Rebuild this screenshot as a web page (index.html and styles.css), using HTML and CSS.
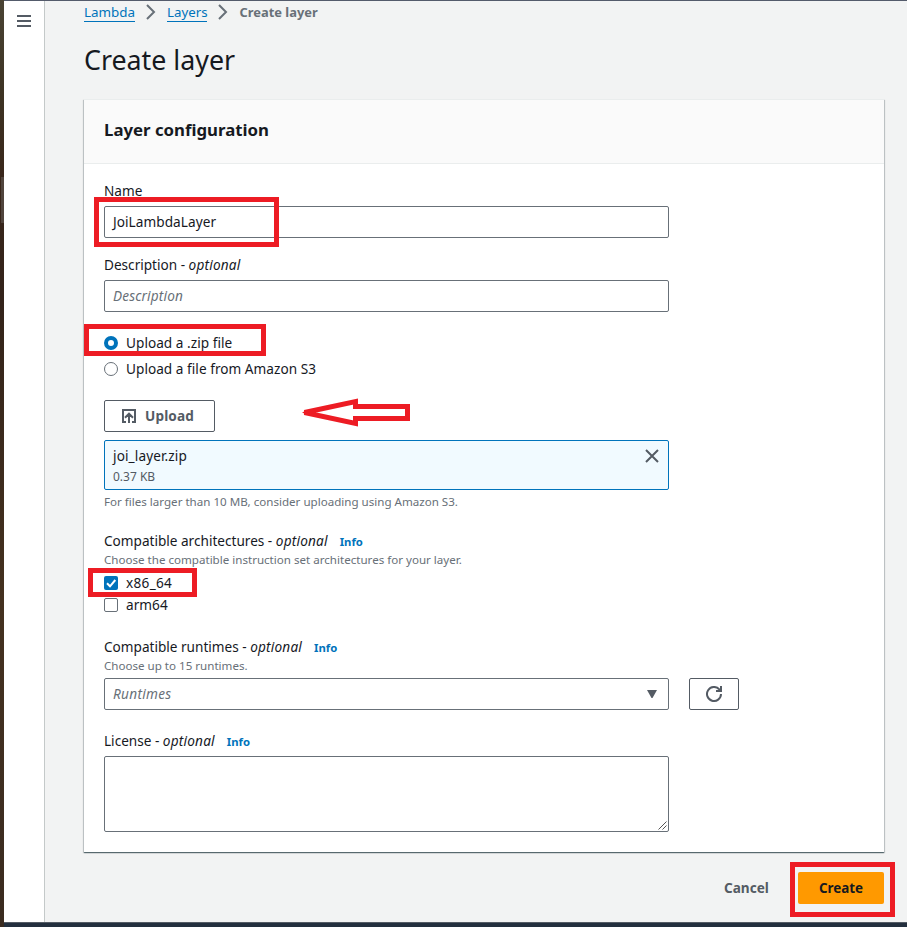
FILE: index.html
```html
<!DOCTYPE html>
<html lang="en">
<head>
<meta charset="utf-8">
<title>Create layer</title>
<link rel="stylesheet" href="styles.css">
</head>
<body>
<div class="desktop-edge"><div class="edge-handle"></div></div>
<div class="window">
  <div class="content">
    <nav class="rail">
      <svg width="14" height="12" viewBox="0 0 14 12"><path d="M0 1h14M0 6h14M0 11h14" stroke="#545b64" stroke-width="2"/></svg>
    </nav>
    <main class="main">
      <div class="crumbs">
        <a class="crumb-lambda">Lambda</a>
        <svg width="10" height="16" viewBox="0 0 10 16"><path d="M1 1l7 7-7 7" fill="none" stroke="#687078" stroke-width="2"/></svg>
        <a class="crumb-layers">Layers</a>
        <svg width="10" height="16" viewBox="0 0 10 16"><path d="M1 1l7 7-7 7" fill="none" stroke="#687078" stroke-width="2"/></svg>
        <span class="crumb-current">Create layer</span>
      </div>
      <h1>Create layer</h1>
      <section class="card">
        <header class="card-head"><h2>Layer configuration</h2></header>
        <div class="card-body">
          <div class="field">
            <label class="label">Name</label>
            <div class="input">JoiLambdaLayer</div>
          </div>
          <div class="field">
            <label class="label">Description - <i>optional</i></label>
            <div class="input placeholder">Description</div>
          </div>
          <div class="radios group">
            <div class="option"><span class="radio checked"></span>Upload a .zip file</div>
            <div class="option"><span class="radio"></span>Upload a file from Amazon S3</div>
          </div>
          <div class="upload group">
            <div class="button upload-button">
              <svg width="14" height="14" viewBox="0 0 14 14" fill="none" stroke="#545b64" stroke-width="2"><path d="M4 13H1V1h12v12h-3M7 14V5M3 8.700L7 4.700l4 4"/></svg>
              <span>Upload</span>
            </div>
            <div class="file">
              <div>
                <div class="file-name">joi_layer.zip</div>
                <div class="file-size">0.37 KB</div>
              </div>
              <svg width="14" height="14" viewBox="0 0 14 14"><path d="M1 1l12 12M13 1L1 13" stroke="#545b64" stroke-width="2"/></svg>
            </div>
            <div class="hint upload-hint">For files larger than 10 MB, consider uploading using Amazon S3.</div>
          </div>
          <div class="field group">
            <div class="label">Compatible architectures - <i>optional</i><a class="info">Info</a></div>
            <div class="hint">Choose the compatible instruction set architectures for your layer.</div>
            <div class="checks">
              <div class="option"><span class="check checked"><svg width="14" height="14" viewBox="0 0 14 14"><path d="M3 7.300l3 3L11.300 4" fill="none" stroke="#fff" stroke-width="2"/></svg></span><span class="arch">x86_64</span></div>
              <div class="option"><span class="check"></span>arm64</div>
            </div>
          </div>
          <div class="field group">
            <div class="label">Compatible runtimes - <i>optional</i><a class="info">Info</a></div>
            <div class="hint">Choose up to 15 runtimes.</div>
            <div class="select-row">
              <div class="input select placeholder"><span>Runtimes</span><svg width="10" height="8" viewBox="0 0 10 8"><path d="M0 0h10L5.500 8h-1z" fill="#545b64"/></svg></div>
              <div class="button refresh"><svg width="16" height="16" viewBox="0 0 16 16" fill="none" stroke="#545b64" stroke-width="2"><path d="M15 8A7 7 0 1 1 13.300 3.400L14.500 5M15 0v5h-5"/></svg></div>
            </div>
          </div>
          <div class="field group">
            <div class="label">License - <i>optional</i><a class="info">Info</a></div>
            <div class="textarea"><svg width="9" height="9" viewBox="0 0 9 9"><path d="M.5 8.500l8-8M4.500 8.500l4-4" stroke="#555" stroke-width="1"/></svg></div>
          </div>
        </div>
      </section>
      <footer class="actions">
        <span class="cancel">Cancel</span>
        <span class="create">Create</span>
      </footer>
    </main>
  </div>
  <div class="bottom-bar"></div>
</div>
<div class="mark mark-name"></div>
<div class="mark mark-zip"></div>
<div class="mark mark-arch"></div>
<div class="mark mark-create"></div>
<svg class="arrow" width="110" height="32" viewBox="0 0 110 32"><path d="M4.500 15.500L55.500 4.500v5h52v12h-52v5z" fill="none" stroke="#ed1c24" stroke-width="5" stroke-linejoin="miter"/><path d="M2 15.500l6-2.500v5z" fill="#ed1c24"/></svg>
</body>
</html>
```
FILE: styles.css
```css
* { box-sizing: border-box; }
body {
  margin: 0;
  height: 927px;
  overflow: hidden;
  display: flex;
  position: relative;
  background: #f2f3f3;
  color: #16191f;
  font-family: "Noto Sans", "Open Sans", sans-serif;
  font-size: 13.6px;
  line-height: 22px;
}
svg { display: block; flex: none; }
.desktop-edge {
  width: 4px;
  height: 927px;
  padding-top: 177px;
  background: linear-gradient(#4a4334 0, #3e3424 90px, #39261a 180px, #33231a 300px, #44311f 600px, #3a2b20 927px);
}
.edge-handle { height: 46px; margin-left: 1px; background: #50443c; }
.window { flex: 1; display: flex; flex-direction: column; border-top: 1px solid #545b6b; }
.content { flex: 1; display: flex; }
.rail {
  width: 41px;
  padding: 14px 0 0 13px;
  background: #fff;
  border-right: 1px solid #c4c9c9;
}
.main { flex: 1; padding: 0 23px 0 39px; }
.crumbs { display: flex; align-items: center; height: 22px; color: #687078; }
.crumbs a { color: #0073bb; line-height: 17px; border-bottom: 1px solid #0073bb; margin-top: 2px; white-space: nowrap; }
.crumb-lambda { width: 51px; font-size: 13.4px; margin-right: 11px; }
.crumb-layers { width: 40px; font-size: 13.3px; margin: 0 11px; }
.crumb-current { font-weight: 700; font-size: 12.9px; margin-left: 11.500px; }
h1 { margin: 19px 0 0; font-size: 26.8px; font-weight: 400; line-height: 36px; }
.card {
  margin-top: 21px;
  height: 753px;
  background: #fff;
  border-top: 1px solid #eaeded;
  box-shadow: 0 1px 1px 0 rgba(0, 28, 36, .5), 1px 1px 1px 0 rgba(0, 28, 36, .15), -1px 1px 1px 0 rgba(0, 28, 36, .15);
}
.card-head { height: 64px; padding: 18px 20px; background: #fafafa; border-bottom: 1px solid #eaeded; }
h2 { margin: 0; font-size: 16.8px; line-height: 23px; font-weight: 700; }
.card-body { padding: 16px 20px 20px; display: flex; flex-direction: column; gap: 16px; }
.group { margin-top: 4px; }
.field { display: flex; flex-direction: column; }
.label { height: 22px; white-space: nowrap; }
.label i { letter-spacing: .2px; }
.info { color: #0073bb; font-size: 11.3px; font-weight: 700; margin-left: 12px; }
.input {
  width: 565px;
  height: 32px;
  margin-top: 4px;
  padding: 0 8px;
  border: 1px solid #687078;
  border-radius: 2px;
  line-height: 30px;
  letter-spacing: .06px;
  background: #fff;
}
.placeholder { color: #687078; font-style: italic; letter-spacing: .16px; }
.radios { display: flex; flex-direction: column; gap: 4px; }
.option { display: flex; align-items: center; height: 22px; gap: 8px; letter-spacing: .04px; }
.radio { width: 14px; height: 14px; border-radius: 50%; border: 1px solid #687078; }
.radio.checked { border: 4px solid #0073bb; }
.button {
  height: 32px;
  display: flex;
  align-items: center;
  border: 1px solid #545b64;
  border-radius: 2px;
  background: #fff;
  color: #545b64;
  font-weight: 700;
}
.upload-button { width: 111px; padding-left: 17px; gap: 9px; letter-spacing: .15px; }
.file {
  width: 565px;
  height: 50px;
  margin-top: 8px;
  padding: 4px 9px 4px 8px;
  display: flex;
  justify-content: space-between;
  border: 1px solid #0073bb;
  border-radius: 2px;
  background: #f1faff;
}
.file svg { margin-top: 4px; }
.file-name { letter-spacing: .12px; }
.file-size { font-size: 12px; line-height: 20px; color: #545b64; }
.hint { height: 16px; line-height: 16px; font-size: 11.58px; color: #687078; white-space: nowrap; }
.upload-hint { margin-top: 4px; }
.checks { margin-top: 4px; }
.check { width: 14px; height: 14px; border: 1px solid #687078; border-radius: 2px; }
.check.checked { border: 0; background: #0073bb; }
.arch { letter-spacing: .3px; }
.select-row { display: flex; gap: 20px; margin-top: 4px; }
.select { margin: 0; display: flex; align-items: center; justify-content: space-between; padding-right: 11px; }
.select span { letter-spacing: .3px; }
.refresh { width: 50px; justify-content: center; }
.textarea {
  width: 565px;
  height: 76px;
  margin-top: 4px;
  border: 1px solid #687078;
  border-radius: 2px;
  display: flex;
  align-items: flex-end;
  justify-content: flex-end;
  padding: 1px;
}
.actions { display: flex; justify-content: flex-end; margin-top: 20px; line-height: 32px; font-weight: 700; }
.cancel { width: 45px; color: #545b64; margin-right: 29px; }
.create { width: 86px; height: 32px; text-align: center; font-size: 13.4px; background: #ff9900; border-radius: 2px; }
.bottom-bar { height: 5px; background: #232f3e; border-top: 1px solid #545b64; }
.mark { position: absolute; border: 5px solid #ed1c24; }
.mark-name { left: 94px; top: 197px; width: 185px; height: 50px; }
.mark-zip { left: 84px; top: 324px; width: 182px; height: 32px; }
.mark-arch { left: 88px; top: 568px; width: 109px; height: 29px; }
.mark-create { left: 790px; top: 862px; width: 105px; height: 55px; }
.arrow { position: absolute; left: 300px; top: 397px; }
```
